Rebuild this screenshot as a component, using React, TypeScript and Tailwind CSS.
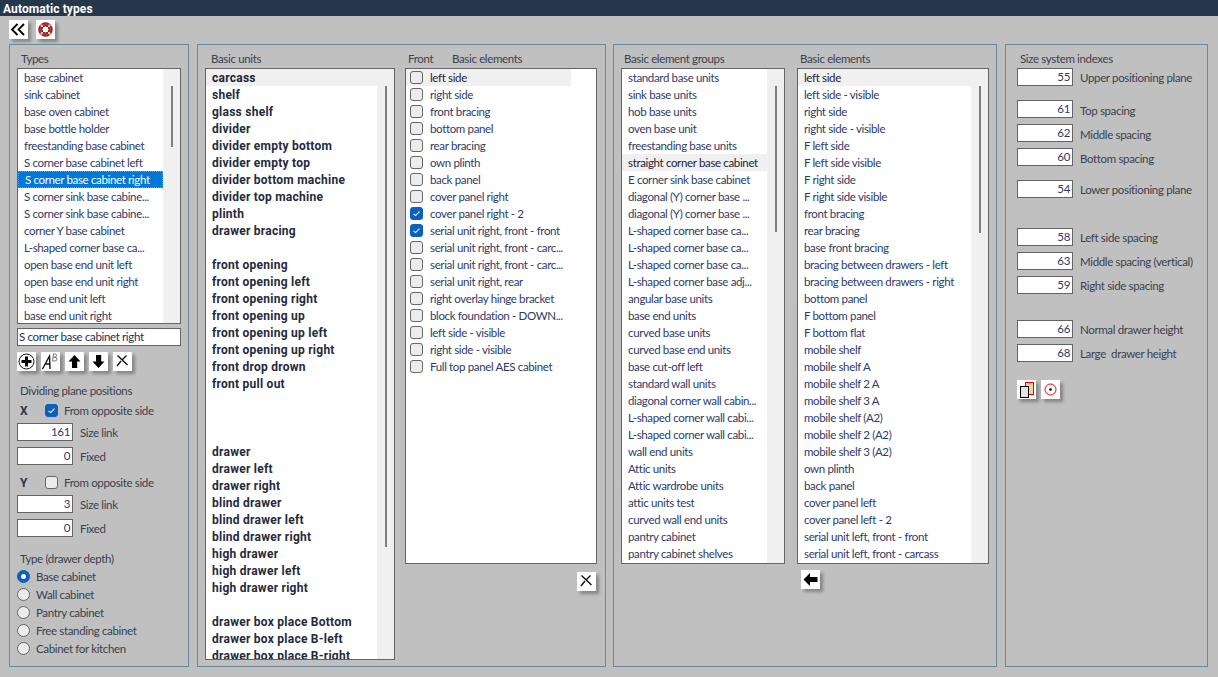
import React from "react";

const font = "font-['Lato','Liberation_Sans',sans-serif]";
const boldFont = "font-['Roboto','Liberation_Sans',sans-serif]";

const types = ["base cabinet","sink cabinet","base oven cabinet","base bottle holder","freestanding base cabinet","S corner base cabinet left","S corner base cabinet right","S corner sink base cabine...","S corner sink base cabine...","corner Y base cabinet","L-shaped corner base ca...","open base end unit left","open base end unit right","base end unit left","base end unit right"];
const units = ["carcass","shelf","glass shelf","divider","divider empty bottom","divider empty top","divider bottom machine","divider top machine","plinth","drawer bracing","","front opening","front opening left","front opening right","front opening up","front opening up left","front opening up right","front drop drown","front pull out","","","","drawer","drawer left","drawer right","blind drawer","blind drawer left","blind drawer right","high drawer","high drawer left","high drawer right","","drawer box place Bottom","drawer box place B-left","drawer box place B-right"];
const front = ["left side","right side","front bracing","bottom panel","rear bracing","own plinth","back panel","cover panel right","cover panel right - 2","serial unit right, front - front","serial unit right, front - carc...","serial unit right, front - carc...","serial unit right, rear","right overlay hinge bracket","block foundation - DOWN...","left side - visible","right side - visible","Full top panel AES cabinet"];
const groups = ["standard base units","sink base units","hob base units","oven base unit","freestanding base units","straight corner base cabinet","E corner sink base cabinet","diagonal (Y) corner base ...","diagonal (Y) corner base ...","L-shaped corner base ca...","L-shaped corner base ca...","L-shaped corner base ca...","L-shaped corner base adj...","angular base units","base end units","curved base units","curved base end units","base cut-off left","standard wall units","diagonal corner wall cabin...","L-shaped corner wall cabi...","L-shaped corner wall cabi...","wall end units","Attic units","Attic wardrobe units","attic units test","curved wall end units","pantry cabinet","pantry cabinet shelves"];
const elements = ["left side","left side - visible","right side","right side - visible","F left side","F left side visible","F right side","F right side visible","front bracing","rear bracing","base front bracing","bracing between drawers - left","bracing between drawers - right","bottom panel","F bottom panel","F bottom flat","mobile shelf","mobile shelf A","mobile shelf 2 A","mobile shelf 3 A","mobile shelf (A2)","mobile shelf 2 (A2)","mobile shelf 3 (A2)","own plinth","back panel","cover panel left","cover panel left - 2","serial unit left, front - front","serial unit left, front - carcass"];

const Icon = ({ children }: { children: React.ReactNode }) => (
  <svg viewBox="0 0 19 19" className="h-[19px] w-[19px]">{children}</svg>
);

const Btn = ({ children, className = "" }: { children: React.ReactNode; className?: string }) => (
  <div className={`h-[19px] w-[19px] shrink-0 bg-white shadow-[3px_3px_3px_rgba(0,0,0,0.3)] ${className}`}>
    <Icon>{children}</Icon>
  </div>
);

const XIcon = () => (
  <path d="M4.5 3.5 L14.5 13 M13.5 3.5 L9.5 7.5 M8 9 L4 14" stroke="#111" strokeWidth="1.4" fill="none" />
);

const Scroll = ({ top, height }: { top: number; height: number }) => (
  <div className="flex w-[17px] shrink-0 justify-center bg-[#f0f0f0]">
    <div className="w-[2px] bg-[#7f7f7f]" style={{ marginTop: top, height }} />
  </div>
);

const Row = ({ text, hl, sel, bold }: { text: string; hl?: boolean; sel?: boolean; bold?: boolean }) => (
  <div
    className={`h-[17px] shrink-0 whitespace-nowrap pl-[6px] ${
      sel ? "border border-dotted border-[#c98a3c] bg-[#0078d7] pl-[5px] leading-[15px] text-white" : hl ? "bg-[#f0f0f0] text-[#1c2233]" : bold ? "text-[#252a3a]" : "text-[#2f3a66]"
    } ${bold ? `${boldFont} text-[12px] font-bold leading-[19px] tracking-[0.25px]` : sel ? "" : "leading-[17px]"}`}
  >
    {text}
  </div>
);

const ListBox = ({ items, className, hl, sel, bold, thumb, thumbTop = 17 }: { items: string[]; className: string; hl?: number; sel?: number; bold?: boolean; thumb: number; thumbTop?: number }) => (
  <div className={`flex overflow-hidden border border-[#646464] bg-white ${className}`}>
    <div className="flex min-w-0 flex-1 flex-col overflow-hidden">
      {items.map((t, i) => (
        <Row key={i} text={t} hl={i === hl} sel={i === sel} bold={bold} />
      ))}
    </div>
    <Scroll top={thumbTop} height={thumb} />
  </div>
);

const Field = ({ value = "", className = "w-[56px]", left }: { value?: string; className?: string; left?: boolean }) => (
  <div className={`h-[18px] shrink-0 border border-[#646464] bg-white pr-[2px] leading-[15px] text-[#2f3a66] ${left ? "pl-px text-left text-[#26304f]" : "text-right"} ${className}`}>
    {value}
  </div>
);

const Label = ({ children, className = "" }: { children: React.ReactNode; className?: string }) => (
  <div className={`h-[17px] whitespace-pre leading-[17px] text-[#3a404e] ${className}`}>{children}</div>
);

const FieldRow = ({ value, label, className = "", low }: { value: string; label: string; className?: string; low?: boolean }) => (
  <div className={`flex h-[18px] items-center ${className}`}>
    <Field value={value} />
    <Label className={`ml-[7px] ${low ? "mt-[3px]" : ""}`}>{label}</Label>
  </div>
);

const Check = ({ on }: { on?: boolean }) => (
  <div className={`flex h-[13px] w-[13px] shrink-0 items-center justify-center rounded-[3px] border ${on ? "border-[#0a5fbf] bg-[#0a5fbf]" : "border-[#666] bg-[#ececec]"}`}>
    {on && (
      <svg viewBox="0 0 13 13" className="h-[13px] w-[13px]">
        <path d="M3 6.8 L5.4 9 L10 4.2" stroke="#fff" strokeWidth="1.2" fill="none" />
      </svg>
    )}
  </div>
);

const Radio = ({ on, label }: { on?: boolean; label: string }) => (
  <div className="flex h-[18px] items-center">
    <div className={`flex h-[13px] w-[13px] items-center justify-center rounded-full border ${on ? "border-[#0a5fbf] bg-[#0a5fbf]" : "border-[#666] bg-[#ececec]"}`}>
      {on && <div className="h-[5px] w-[5px] rounded-full bg-white" />}
    </div>
    <Label className="ml-[6px]">{label}</Label>
  </div>
);

const Panel = ({ className, children }: { className: string; children: React.ReactNode }) => (
  <div className={`h-[623px] shrink-0 border border-[#6b8a9a] ${className}`}>{children}</div>
);

export default function App() {
  return (
    <div className={`${font} h-[677px] w-[1218px] overflow-hidden bg-[#c0c0c0] text-[11.5px] tracking-[-0.35px]`}>
      <div className={`${boldFont} h-[16px] bg-[#24374b] pl-[3px] text-[12px] font-bold leading-[18px] tracking-[0.1px] text-white`}>Automatic types</div>
      <div className="flex h-[28px] gap-[8px] pl-[9px] pt-[4px]">
        <Btn>
          <path d="M8.5 4 L3 9.5 L8.5 15 M15 4 L9.5 9.5 L15 15" stroke="#000" strokeWidth="1.8" fill="none" />
        </Btn>
        <Btn>
          <circle cx="9.5" cy="9.5" r="6.8" fill="#ee1c1c" stroke="#222" strokeWidth="0.8" />
          <circle cx="9.5" cy="9.5" r="3.6" fill="#fff" stroke="#222" strokeWidth="1" />
          <path d="M4.9 4.9 L6.7 6.7 M14.1 4.9 L12.3 6.7 M4.9 14.1 L6.7 12.3 M14.1 14.1 L12.3 12.3" stroke="#fff" strokeWidth="1.5" />
        </Btn>
      </div>

      <div className="flex pl-[9px]">
        <Panel className="mr-[8px] w-[180px] pl-[7px]">
          <Label className="ml-[4px] mt-[5px]">Types</Label>
          <ListBox items={types} sel={6} thumb={61} className="mt-px h-[256px] w-[164px]" />
          <Field value="S corner base cabinet right" left className="mt-[4px] w-[164px]" />
          <div className="mt-[6px] flex gap-[5px]">
            <Btn>
              <circle cx="9.5" cy="9.5" r="7.5" fill="none" stroke="#111" strokeWidth="1" />
              <path d="M9.5 4.5 V14.5 M4.5 9.5 H14.5" stroke="#000" strokeWidth="3" />
            </Btn>
            <Btn>
              <path d="M1.5 17 L8.5 4 L9 17 M4.5 12 H9.5" stroke="#111" strokeWidth="1.4" fill="none" />
              <path d="M12.5 2 L11.5 9 H14 Q16 9 16 7 Q16 5.2 13.5 5.2 H12 M12.5 2 H14.5 Q15.5 2 15.5 3.5 Q15.5 5.2 13.5 5.2" stroke="#666" strokeWidth="0.9" fill="none" />
            </Btn>
            <Btn>
              <path d="M9.5 3 L15.5 9.5 H12.2 V16 H7 V9.5 H3.5 Z" fill="#000" />
            </Btn>
            <Btn>
              <path d="M9.5 16 L15.5 9.5 H12.2 V3 H7 V9.5 H3.5 Z" fill="#000" />
            </Btn>
            <Btn><XIcon /></Btn>
          </div>
          <Label className="ml-[3px] mt-[11px]">Dividing plane positions</Label>
          <div className="mt-[3px] flex h-[17px] items-center">
            <div className={`${boldFont} ml-[3px] w-[25px] text-[12px] font-bold text-[#2b3650]`}>X</div>
            <Check on />
            <Label className="ml-[6px]">From opposite side</Label>
          </div>
          <FieldRow value="161" label="Size link" className="mt-[4px]" />
          <FieldRow value="0" label="Fixed" className="mt-[6px]" />
          <div className="mt-[9px] flex h-[17px] items-center">
            <div className={`${boldFont} ml-[3px] w-[25px] text-[12px] font-bold text-[#2b3650]`}>Y</div>
            <Check />
            <Label className="ml-[6px]">From opposite side</Label>
          </div>
          <FieldRow value="3" label="Size link" className="mt-[4px]" />
          <FieldRow value="0" label="Fixed" className="mt-[6px]" />
          <Label className="ml-[3px] mt-[13px]">Type (drawer depth)</Label>
          <div className="flex flex-col">
            <Radio on label="Base cabinet" />
            <Radio label="Wall cabinet" />
            <Radio label="Pantry cabinet" />
            <Radio label="Free standing cabinet" />
            <Radio label="Cabinet for kitchen" />
          </div>
        </Panel>

        <Panel className="mr-[7px] flex w-[409px] pl-[7px]">
          <div>
            <Label className="ml-[6px] mt-[5px]">Basic units</Label>
            <ListBox items={units} hl={0} bold thumb={461} className="mt-px h-[592px] w-[190px]" />
          </div>
          <div className="ml-[10px]">
            <div className="mt-[5px] flex">
              <Label className="ml-[3px] w-[44px]">Front</Label>
              <Label>Basic elements</Label>
            </div>
            <div className="mt-px h-[496px] w-[192px] overflow-hidden border border-[#646464] bg-white">
              {front.map((t, i) => (
                <div key={i} className={`flex h-[17px] w-[165px] items-center pl-[4px] ${i === 0 ? "bg-[#f0f0f0]" : ""}`}>
                  <Check on={i === 8 || i === 9} />
                  <span className={`ml-[7px] whitespace-nowrap ${i === 0 ? "text-[#1c2233]" : "text-[#2f3a66]"}`}>{t}</span>
                </div>
              ))}
            </div>
            <div className="mt-[8px] flex justify-end pr-px">
              <Btn><XIcon /></Btn>
            </div>
          </div>
        </Panel>

        <Panel className="mr-[8px] flex w-[384px] pl-[7px]">
          <div>
            <Label className="ml-[3px] mt-[5px]">Basic element groups</Label>
            <ListBox items={groups} hl={5} thumb={146} className="mt-px h-[496px] w-[164px]" />
          </div>
          <div className="ml-[12px]">
            <Label className="ml-[3px] mt-[5px]">Basic elements</Label>
            <ListBox items={elements} hl={0} thumb={147} className="mt-px h-[496px] w-[192px]" />
            <div className="ml-[4px] mt-[6px]">
              <Btn>
                <path d="M2.5 9.5 L9 3 V7 H16.5 V12 H9 V16 Z" fill="#000" />
              </Btn>
            </div>
          </div>
        </Panel>

        <Panel className="w-[203px] pl-[11px]">
          <Label className="ml-[3px] mt-[5px]">Size system indexes</Label>
          <FieldRow value="55" label="Upper positioning plane" className="mt-px" />
          <FieldRow value="61" label="Top spacing" low className="mt-[14px]" />
          <FieldRow value="62" label="Middle spacing" low className="mt-[6px]" />
          <FieldRow value="60" label="Bottom spacing" low className="mt-[6px]" />
          <FieldRow value="54" label="Lower positioning plane" className="mt-[14px]" />
          <FieldRow value="58" label="Left side spacing" className="mt-[30px]" />
          <FieldRow value="63" label="Middle spacing (vertical)" className="mt-[6px]" />
          <FieldRow value="59" label="Right side spacing" className="mt-[6px]" />
          <FieldRow value="66" label="Normal drawer height" className="mt-[26px]" />
          <FieldRow value="68" label="Large  drawer height" className="mt-[6px]" />
          <div className="mt-[18px] flex gap-[5px]">
            <Btn>
              <rect x="8.5" y="2.5" width="8" height="12" fill="#f6cfa0" stroke="#e00" strokeWidth="1" />
              <rect x="3.5" y="6.5" width="8" height="11" fill="#e4e4e4" stroke="#000" strokeWidth="1" />
            </Btn>
            <Btn>
              <circle cx="9.5" cy="9.5" r="5.5" fill="none" stroke="#e00" strokeWidth="1" />
              <circle cx="9.5" cy="9.5" r="1.3" fill="#000" />
            </Btn>
          </div>
        </Panel>
      </div>
    </div>
  );
}
